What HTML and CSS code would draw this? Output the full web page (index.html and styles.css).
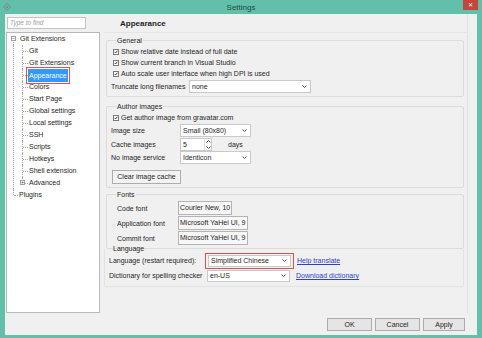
FILE: index.html
```html
<!DOCTYPE html>
<html lang="en">
<head>
    <meta charset="UTF-8">
    <meta name="viewport" content="width=device-width, initial-scale=1.0">
    <title>Settings</title>
    <link rel="stylesheet" href="styles.css">
</head>
<body>
    <div class="window">
        <div class="titlebar">
            <svg class="app-icon" viewBox="0 0 8 8"><path d="M4 0.5 L7.5 4 L4 7.5 L0.5 4 Z" fill="none" stroke="#7c8c88" stroke-width="1"/><circle cx="4" cy="4" r="1.2" fill="#7c8c88"/></svg>
            <span class="title">Settings</span>
            <span class="close">&#x2715;</span>
        </div>
        <div class="client">
            <div class="main">
                <div class="sidebar">
                    <div class="search">Type to find</div>
                    <div class="tree">
                        <div class="row root"><span class="expander">&minus;</span>Git Extensions</div>
                        <ul class="children">
                            <li>Git</li>
                            <li>Git Extensions</li>
                            <li><span class="selected">Appearance</span></li>
                            <li>Colors</li>
                            <li>Start Page</li>
                            <li>Global settings</li>
                            <li>Local settings</li>
                            <li>SSH</li>
                            <li>Scripts</li>
                            <li>Hotkeys</li>
                            <li>Shell extension</li>
                            <li class="collapsed"><span class="expander">+</span>Advanced</li>
                        </ul>
                        <div class="row plugins">Plugins</div>
                    </div>
                </div>
                <div class="content">
                    <div class="page-title">Appearance</div>

                    <fieldset class="group general">
                        <legend>General</legend>
                        <div class="check-row"><span class="checkbox"><svg viewBox="0 0 6 6"><path d="M1 3 L2.5 4.5 L5 1.2" /></svg></span>Show relative date instead of full date</div>
                        <div class="check-row"><span class="checkbox"><svg viewBox="0 0 6 6"><path d="M1 3 L2.5 4.5 L5 1.2" /></svg></span>Show current branch in Visual Studio</div>
                        <div class="check-row"><span class="checkbox"><svg viewBox="0 0 6 6"><path d="M1 3 L2.5 4.5 L5 1.2" /></svg></span>Auto scale user interface when high DPI is used</div>
                        <div class="field-row truncate">
                            <span class="label">Truncate long filenames</span>
                            <div class="select wide">none<svg class="chevron" viewBox="0 0 5 3"><path d="M0.5 0.5 L2.5 2.5 L4.5 0.5" /></svg></div>
                        </div>
                    </fieldset>

                    <fieldset class="group author">
                        <legend>Author images</legend>
                        <div class="check-row"><span class="checkbox"><svg viewBox="0 0 6 6"><path d="M1 3 L2.5 4.5 L5 1.2" /></svg></span>Get author image from gravatar.com</div>
                        <div class="field-row">
                            <span class="label">Image size</span>
                            <div class="select">Small (80x80)<svg class="chevron" viewBox="0 0 5 3"><path d="M0.5 0.5 L2.5 2.5 L4.5 0.5" /></svg></div>
                        </div>
                        <div class="field-row">
                            <span class="label">Cache images</span>
                            <div class="spinner">5<span class="spin-arrows"><svg viewBox="0 0 5 3"><path d="M0.5 2.5 L2.5 0.5 L4.5 2.5" /></svg><svg viewBox="0 0 5 3"><path d="M0.5 0.5 L2.5 2.5 L4.5 0.5" /></svg></span></div>
                            <span class="unit">days</span>
                        </div>
                        <div class="field-row">
                            <span class="label">No image service</span>
                            <div class="select">Identicon<svg class="chevron" viewBox="0 0 5 3"><path d="M0.5 0.5 L2.5 2.5 L4.5 0.5" /></svg></div>
                        </div>
                        <button class="btn clear-cache">Clear image cache</button>
                    </fieldset>

                    <fieldset class="group fonts">
                        <legend>Fonts</legend>
                        <div class="field-row"><span class="label">Code font</span><button class="btn font-btn">Courier New, 10</button></div>
                        <div class="field-row"><span class="label">Application font</span><button class="btn font-btn">Microsoft YaHei UI, 9</button></div>
                        <div class="field-row"><span class="label">Commit font</span><button class="btn font-btn">Microsoft YaHei UI, 9</button></div>
                    </fieldset>

                    <fieldset class="group language">
                        <legend>Language</legend>
                        <div class="field-row">
                            <span class="label">Language (restart required):</span>
                            <div class="highlight"><div class="select lang">Simplified Chinese<svg class="chevron" viewBox="0 0 5 3"><path d="M0.5 0.5 L2.5 2.5 L4.5 0.5" /></svg></div></div>
                            <a class="link" href="#">Help translate</a>
                        </div>
                        <div class="field-row">
                            <span class="label">Dictionary for spelling checker</span>
                            <div class="select lang dict">en-US<svg class="chevron" viewBox="0 0 5 3"><path d="M0.5 0.5 L2.5 2.5 L4.5 0.5" /></svg></div>
                            <a class="link" href="#">Download dictionary</a>
                        </div>
                    </fieldset>
                </div>
            </div>
            <div class="footer">
                <button class="btn action">OK</button>
                <button class="btn action">Cancel</button>
                <button class="btn action">Apply</button>
            </div>
        </div>
    </div>
</body>
</html>
```

FILE: styles.css
```css
* {
    box-sizing: border-box;
}
body {
    margin: 0;
    font-family: "Liberation Sans Narrow", "Liberation Sans", Arial, sans-serif;
    font-size: 7px;
    color: #1e1e1e;
}
.window {
    width: 482px;
    height: 338px;
    background-color: #62bfa9;
    display: flex;
    flex-direction: column;
}
.titlebar {
    height: 14px;
    display: flex;
    align-items: center;
    padding-left: 3px;
}
.app-icon {
    width: 8px;
    height: 8px;
}
.title {
    flex: 1;
    text-align: center;
    font-family: "Liberation Sans", Arial, sans-serif;
    font-size: 8px;
    color: #1f4d44;
    padding-left: 8px;
}
.close {
    align-self: flex-start;
    width: 15px;
    height: 10px;
    margin-right: 4px;
    background-color: #c8453c;
    color: #fff;
    font-size: 6px;
    line-height: 10px;
    text-align: center;
}
.client {
    flex: 1;
    margin: 0 5px 3px 5px;
    background-color: #f0f0f0;
    display: flex;
    flex-direction: column;
}
.main {
    height: 299px;
    display: flex;
}

/* left side: search + tree */
.sidebar {
    width: 95px;
    padding-top: 3px;
}
.search {
    width: 79px;
    height: 12px;
    margin-left: 2px;
    background: #fff;
    border: 1px solid #c4c4c4;
    color: #a0a0a0;
    font-style: italic;
    font-size: 6.5px;
    line-height: 10px;
    padding-left: 2px;
}
.tree {
    width: 94px;
    height: 281px;
    margin: 3px 0 0 1px;
    background: #fff;
    border: 1px solid #b9b9b9;
}
.row, .children li {
    position: relative;
    height: 12px;
    line-height: 12px;
    white-space: nowrap;
}
.children {
    list-style: none;
    margin: 0;
    padding: 0;
    position: relative;
}
.children::before {
    content: "";
    position: absolute;
    left: 6px;
    top: 0;
    bottom: 0;
    border-left: 1px dotted #a8a8a8;
}
.root {
    padding-left: 13px;
}
.root::after {
    content: "";
    position: absolute;
    left: 6px;
    top: 9px;
    bottom: 0;
    border-left: 1px dotted #a8a8a8;
}
.expander {
    position: absolute;
    top: 3px;
    width: 5px;
    height: 5px;
    border: 1px solid #a0a0a0;
    background: #fff;
    font-size: 5px;
    line-height: 3px;
    text-align: center;
    color: #444;
    z-index: 1;
}
.root .expander {
    left: 4px;
}
.children li {
    padding-left: 22px;
}
.children li::before {
    content: "";
    position: absolute;
    left: 15px;
    top: 0;
    bottom: 0;
    border-left: 1px dotted #a8a8a8;
}
.children li:last-child::before {
    bottom: 6px;
}
.children li::after {
    content: "";
    position: absolute;
    left: 16px;
    top: 6px;
    width: 5px;
    border-top: 1px dotted #a8a8a8;
}
.children .expander {
    left: 13px;
}
.selected {
    display: inline-block;
    margin-left: -1px;
    padding: 0 1px;
    height: 13px;
    line-height: 13px;
    background-color: #3399ff;
    color: #fff;
    outline: 1px solid #e0504d;
    outline-offset: 1px;
}
.plugins {
    padding-left: 12px;
}
.plugins::before {
    content: "";
    position: absolute;
    left: 6px;
    top: 0;
    height: 6px;
    border-left: 1px dotted #a8a8a8;
}
.plugins::after {
    content: "";
    position: absolute;
    left: 7px;
    top: 6px;
    width: 4px;
    border-top: 1px dotted #a8a8a8;
}

/* right side: settings page */
.content {
    width: 364px;
    margin-left: 4px;
    border-right: 1px solid #e2e2e2;
}
.page-title {
    height: 19px;
    line-height: 19px;
    padding-left: 16px;
    font-family: "Liberation Sans", Arial, sans-serif;
    font-weight: bold;
    font-size: 8px;
    border-bottom: 1px solid #e4e4e4;
}
.group {
    margin: 3px 3px 0 2px;
    padding: 0 6px 3px 6px;
    border: 1px solid #dcdcdc;
    border-radius: 2px;
    min-width: 0;
}
.group legend {
    padding: 0 1px;
    margin-left: 3px;
    line-height: 9px;
}
.check-row {
    height: 11px;
    display: flex;
    align-items: center;
}
.general .check-row:first-of-type {
    margin-top: 1px;
}
.checkbox {
    width: 6px;
    height: 6px;
    border: 1px solid #7a7a7a;
    background: #fff;
    margin-right: 2px;
    display: flex;
}
.checkbox svg {
    width: 4px;
    height: 4px;
    fill: none;
    stroke: #222;
    stroke-width: 1.2;
}
.field-row {
    display: flex;
    align-items: center;
    height: 13.5px;
}
.label {
    flex: none;
    margin-left: -2px;
}
.truncate {
    height: 14px;
}
.truncate .label {
    width: 78px;
}
.select {
    height: 13px;
    background: #fff;
    border: 1px solid #c9c9c9;
    padding-left: 2px;
    display: flex;
    align-items: center;
    justify-content: space-between;
    padding-right: 3px;
}
.chevron, .spin-arrows svg {
    width: 5px;
    height: 3px;
    fill: none;
    stroke: #555;
    stroke-width: 1;
}
.wide {
    width: 122px;
}
.author {
    margin-top: 5px;
}
.author .label {
    width: 69px;
}
.author .select {
    width: 71px;
}
.author .check-row {
    margin-top: 1px;
    margin-bottom: 1px;
}
.spinner {
    width: 32px;
    height: 13px;
    background: #fff;
    border: 1px solid #c9c9c9;
    padding-left: 2px;
    display: flex;
    align-items: center;
    justify-content: space-between;
}
.spin-arrows {
    display: flex;
    flex-direction: column;
    justify-content: space-around;
    align-items: center;
    width: 7px;
    height: 100%;
    border-left: 1px solid #dcdcdc;
}
.unit {
    margin-left: 16px;
}
.btn {
    font-family: inherit;
    font-size: 7px;
    color: #1e1e1e;
    background: #f3f3f3;
    border: 1px solid #adadad;
    padding: 0 3px;
    height: 14px;
    line-height: 12px;
}
.clear-cache {
    width: 69px;
    margin-top: 5px;
    margin-left: -1px;
}
.fonts {
    margin-top: 2px;
    padding-bottom: 2px;
}
.fonts .field-row {
    height: 15px;
}
.fonts .field-row:first-of-type {
    margin-top: 2px;
}
.fonts .label {
    width: 61px;
    margin-left: 4px;
}
.font-btn {
    background: #f7f7f7;
    border-color: #b4b4b4;
    padding: 0 1px;
}
.language {
    margin-top: -5px;
    margin-left: 0;
    border-color: #e2e2e2;
    border-top-color: transparent;
}
.language legend {
    margin-left: 1px;
}
.language .label {
    width: 96px;
}
.language .field-row:first-of-type {
    height: 16px;
}
.language .field-row {
    height: 14px;
}
.highlight {
    border: 1px solid #e0504d;
    padding: 1px 2px;
}
.lang {
    width: 83px;
    height: 12px;
}
.dict {
    margin-left: 2px;
}
.link {
    margin-left: 6px;
    color: #2f3fd0;
}
.language .field-row:first-of-type .link {
    margin-left: 3px;
}

.footer {
    flex: 1;
    display: flex;
    justify-content: flex-end;
    align-items: flex-start;
    gap: 3px;
    padding: 5px 12px 0 0;
}
.action {
    width: 45px;
    height: 13px;
    background: #e5e5e5;
    border-color: #acacac;
}
.action:last-child {
    width: 42px;
}
```
